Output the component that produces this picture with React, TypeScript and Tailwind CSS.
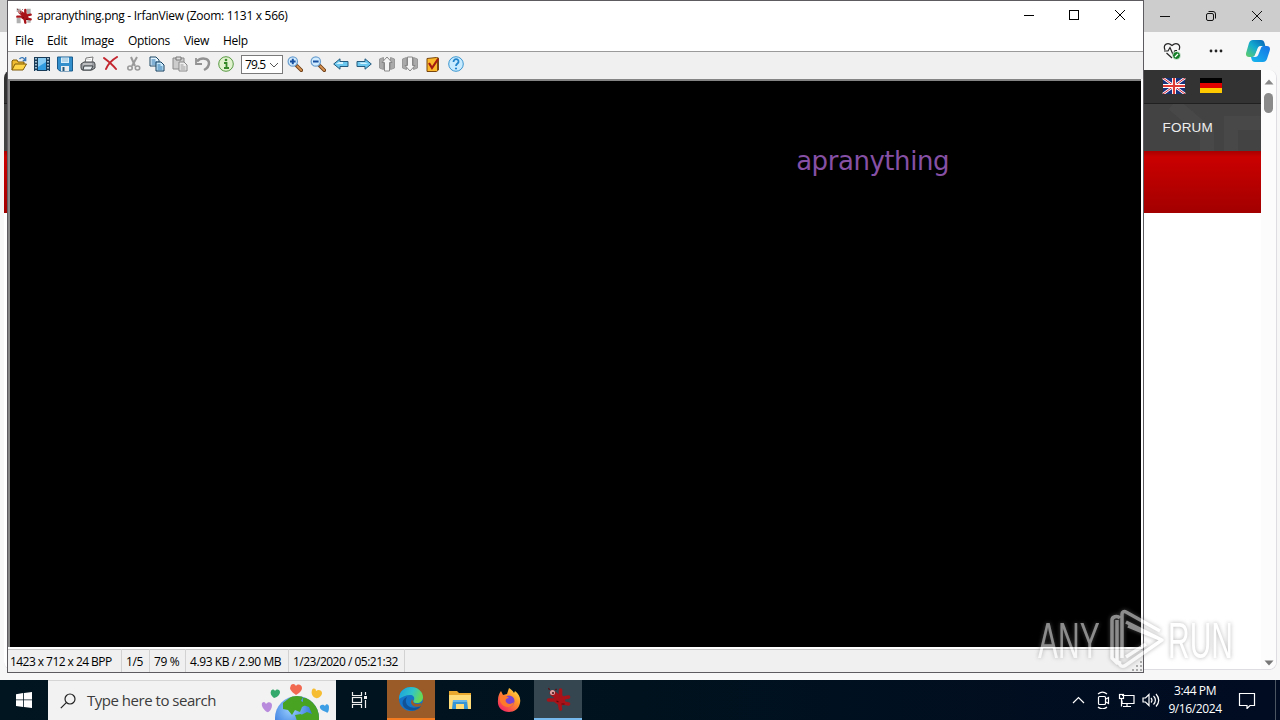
import type { ReactNode } from 'react'

const MENU = [
  { label: 'File', cls: 'w-8 tracking-[-0.1px]' },
  { label: 'Edit', cls: 'w-[34px] tracking-[-0.3px]' },
  { label: 'Image', cls: 'w-[47px] tracking-[-0.3px]' },
  { label: 'Options', cls: 'w-14 tracking-[-0.35px]' },
  { label: 'View', cls: 'w-[39px] tracking-[-0.3px]' },
  { label: 'Help', cls: 'w-10 tracking-[-0.3px]' },
]

const STATUS = [
  { label: '1423 x 712 x 24 BPP', cls: 'w-[114px] pl-0.5 tracking-[-0.55px]' },
  { label: '1/5', cls: 'w-7 pl-1 tracking-[-0.4px]' },
  { label: '79 %', cls: 'w-9 pl-1 tracking-[-0.4px]' },
  { label: '4.93 KB / 2.90 MB', cls: 'w-[103px] pl-1 tracking-[-0.4px]' },
  { label: '1/23/2020 / 05:21:32', cls: 'w-[116px] pl-1 tracking-[-0.5px]' },
]

function Icon({ children }: { children: ReactNode }) {
  return (
    <svg viewBox="0 0 16 16" className="w-4 h-4 shrink-0" fill="none">
      {children}
    </svg>
  )
}

function Splat({ className, grey }: { className: string; grey?: boolean }) {
  return (
    <svg viewBox="0 0 24 24" className={className}>
      {grey && <path d="M1 1h6v5H1zM16 1h6v8h-6zM1 15h6v8H1zM17 16h5v6h-5z" fill="#b0b0b0" />}
      <g stroke="#a81319" strokeLinecap="round" strokeLinejoin="round" fill="#a81319">
        <path d="M9 9l5-1 3 3 1 5-4 2-5-3z" strokeWidth="2" />
        <path d="M14 9V3M17 11l5-1M17 16l5 1M13 16l1 6" strokeWidth="3.600" />
        <path d="M9 13H2" strokeWidth="3.600" />
        <path d="M10 9L6 6" strokeWidth="5.500" />
      </g>
      <circle cx="6" cy="5.500" r="2.500" fill="#dca5a5" />
      <circle cx="6.500" cy="6" r="1.100" fill="#541015" />
      <path d="M3 3L2 1M9 3l1-1M15 17l3 0M10 14l2 1" stroke="#5e080d" strokeWidth="1.200" />
    </svg>
  )
}

function Lens({ plus }: { plus?: boolean }) {
  return (
    <Icon>
      <path d="M9.500 9.500l4.800 4.800" stroke="#704019" strokeWidth="3.600" strokeLinecap="round" />
      <path d="M10.300 10.200l3.900 3.900" stroke="#d99452" strokeWidth="1.800" strokeLinecap="round" />
      <circle cx="5.800" cy="5.500" r="4.700" fill="#d2ecff" stroke="#6c9fcf" strokeWidth="1.200" />
      <path d={plus ? 'M3 5.500h5.600M5.800 2.700v5.600' : 'M3 5.500h5.600'} stroke="#174fa0" strokeWidth="2" />
    </Icon>
  )
}

function ToolbarLeft() {
  return (
    <>
      <Icon>
        <path d="M1 14V5l1-1h4l1 2h6v3" fill="#f0bd32" stroke="#805b08" />
        <path d="M1 14L4 8h11.500L12 14z" fill="#ffd647" stroke="#805b08" />
        <path d="M8.500 3c2-2.500 4.500-1.500 5.500 1M14.700 1v3.500h-3" stroke="#3978b6" strokeWidth="1.300" />
      </Icon>
      <Icon>
        <rect x="0" y="1" width="16" height="14" fill="#183c58" />
        <rect x="4" y="2" width="8" height="12" fill="#8acdf4" />
        <path d="M4 11l8-5v8H4z" fill="#329ee1" />
        <path d="M2 2v13M14 2v13" stroke="#d8ecf7" strokeWidth="1.500" strokeDasharray="1.500 1.500" />
      </Icon>
      <Icon>
        <path d="M.5 1h15v14H3l-2.500-2z" fill="#338fcc" stroke="#1b5c8c" />
        <path d="M4 1.500h8V7H4z" fill="#d9f0fc" />
        <path d="M5 3h6M5 5h6" stroke="#91b9d3" />
        <path d="M4 10h8v5H4z" fill="#e9edf0" />
        <path d="M5.500 11h2v4h-2z" fill="#21577b" />
      </Icon>
      <Icon>
        <path d="M5 7l1-5 7-1-1 6" fill="#fff" stroke="#777" />
        <path d="M1 8l3-2h10l1 2v4l-3 2H2l-1-2z" fill="#9b9fa4" stroke="#45484b" />
        <path d="M4 10h9l-2 4H3z" fill="#e8edf1" stroke="#3d4247" />
        <path d="M3 8h9M6 3.500h5" stroke="#ddd" />
      </Icon>
      <Icon>
        <path d="M1 2c4 3 8 6 12 11M14 1C9 4 5 8 3 13" stroke="#c4262f" strokeWidth="2" strokeLinecap="round" />
      </Icon>
      <Icon>
        <path d="M5 1l4 9M11 1L6 10" stroke="#999" strokeWidth="2" />
        <ellipse cx="4" cy="12" rx="2.200" ry="2" stroke="#999" strokeWidth="1.600" />
        <ellipse cx="11.500" cy="12" rx="2.200" ry="2" stroke="#999" strokeWidth="1.600" />
      </Icon>
      <Icon>
        <path d="M1 1h6l3 3v6H1z" fill="#e5f5ff" stroke="#1c4765" />
        <path d="M2.500 4h4M2.500 6h6M2.500 8h6" stroke="#236eab" />
        <path d="M7 6h5l3 3v6H7z" fill="#c7e9fb" stroke="#123f61" />
        <path d="M8.500 9h3M8.500 11h5M8.500 13h5" stroke="#236eab" />
      </Icon>
      <Icon>
        <path d="M1 2h11v11H1z" fill="#ccc" stroke="#888" />
        <path d="M4 1h5v3H4z" fill="#ddd" stroke="#777" />
        <path d="M7 6h5l3 3v6H7z" fill="#eee" stroke="#888" />
        <path d="M8.500 9h3M8.500 11h5M8.500 13h5" stroke="#999" />
      </Icon>
      <Icon>
        <path d="M2 5.500C6 1 14 2 14 7c0 4-3 6-5 7" stroke="#929292" strokeWidth="2.500" />
        <path d="M1 2v6h6" stroke="#929292" strokeWidth="1.800" />
      </Icon>
      <Icon>
        <circle cx="8" cy="8" r="7.300" fill="#e0f2ce" stroke="#589a43" />
        <circle cx="8" cy="4" r="1.300" fill="#368927" />
        <path d="M6 7h2.500v5M6 12h5" stroke="#368927" strokeWidth="1.800" />
      </Icon>
    </>
  )
}

function ToolbarRight() {
  return (
    <>
      <Lens plus />
      <Lens />
      <Icon>
        <path d="M.7 8L7 2.800v2.700h8v5H7v2.700z" fill="#6dc8ef" stroke="#245a7d" />
        <path d="M3 8l3-2h4v2z" fill="#d6f3ff" />
      </Icon>
      <Icon>
        <path d="M15.300 8L9 2.800v2.700H1v5h8v2.700z" fill="#6dc8ef" stroke="#245a7d" />
        <path d="M3 6.500h6l3 1.500H5z" fill="#d6f3ff" />
      </Icon>
      <Icon>
        <path d="M.5 3l4-1.500v12L.5 12zM15.500 3l-4-1.500v12l4-1.500z" fill="#aaa" stroke="#999" />
        <path d="M8 1l5 5.500h-2.500V15h-5V6.500H3z" fill="#f5f5f5" stroke="#888" />
      </Icon>
      <Icon>
        <path d="M.5 3l4-1.500v12L.5 12zM15.500 3l-4-1.500v12l4-1.500z" fill="#aaa" stroke="#999" />
        <path d="M8 15l5-5.500h-2.500V1h-5v8.500H3z" fill="#f5f5f5" stroke="#888" />
      </Icon>
      <Icon>
        <path d="M2 2.500l9.500-1 2 .5v12l-2 1.500H2z" fill="#fbb82a" stroke="#79460d" />
        <path d="M12 2.500v12l1.500-1V2z" fill="#7f4814" />
        <path d="M4 7l3 5 6-9" stroke="#a51b12" strokeWidth="2.200" />
      </Icon>
      <Icon>
        <circle cx="8" cy="8" r="7.300" fill="#c9ebff" stroke="#3b96cf" />
        <path d="M5.500 6c0-4 5.500-3.500 5 0-.2 1.500-2.500 1.700-2.500 4" stroke="#2386cc" strokeWidth="1.800" />
        <circle cx="8" cy="12.500" r="1.100" fill="#2386cc" />
      </Icon>
    </>
  )
}

function BrowserWindow() {
  return (
    <div className="absolute inset-x-0 top-0 h-[680px] bg-[#f7f7f8] flex flex-col">
      <div className="h-8 shrink-0 bg-[#cdcdcd] flex justify-end items-center">
        <svg viewBox="0 0 124 16" className="w-[124px] h-4 mr-[3px]" fill="none" stroke="#111">
          <path d="M7 8.500h10M99 3l10 10M109 3L99 13" />
          <rect x="53.500" y="5.500" width="7" height="7" rx="1.500" />
          <path d="M55.500 3.500h4.500a2.500 2.500 0 0 1 2.500 2.500v4.500" />
        </svg>
      </div>
      <div className="h-[38px] shrink-0 flex justify-end items-center pr-[9px] gap-[26px]">
        <svg viewBox="0 0 18 18" className="w-[18px] h-[18px] mr-px" fill="none" stroke="#252525" strokeWidth="1.200">
          <path d="M2 8C-.5 2 5-.2 9 3.500 13-.2 18.500 2 16 8M1 9h4l2-3.500 3 7 2-4h2M3.500 11L9 16" />
          <circle cx="13.500" cy="13.500" r="4" fill="#16802a" stroke="#f7f7f7" strokeWidth=".8" />
          <path d="M12 15l3-3" stroke="#fff" />
        </svg>
        <svg viewBox="0 0 16 4" className="w-4 h-1" fill="#222">
          <circle cx="3" cy="2" r="1.400" />
          <circle cx="8" cy="2" r="1.400" />
          <circle cx="13" cy="2" r="1.400" />
        </svg>
        <svg viewBox="0 0 26 24" className="w-[26px] h-6 -ml-[5px]">
          <defs>
            <linearGradient id="cpa" x1="0" y1="1" x2="1" y2="0">
              <stop stopColor="#64cf65" />
              <stop offset=".5" stopColor="#13acd0" />
              <stop offset="1" stopColor="#075fb6" />
            </linearGradient>
            <linearGradient id="cpb" x1="0" y1="1" x2="1" y2="0">
              <stop stopColor="#16b9ed" />
              <stop offset="1" stopColor="#1671e6" />
            </linearGradient>
          </defs>
          <path d="M8 1h8c2 0 3 1 3.500 3l.8 3h-4c-2 0-3 1-3.600 3l-2 5c-.6 2-1.500 3-4 3H4c-3 0-3.500-3-2.600-5L4 4c.8-2 2-3 4-3z" fill="url(#cpa)" />
          <path d="M18 23h-8c-2 0-3-1-3.500-3L6 18c3 0 4.500-1 5.200-3l2-5c.6-2 1.500-3 4-3H22c3 0 3.500 3 2.600 5L22 20c-.8 2-2 3-4 3z" fill="url(#cpb)" />
          <path d="M16 7c-2 0-3 1-3.600 3l-2 5c-.5 1.700-1.200 2.500-2.400 3h2c2 0 3-1 3.600-3l2-5c.5-1.700 1-2.500 2.400-3z" fill="#f7f7f8" />
        </svg>
      </div>
      <div className="h-[600px] ml-1 mr-[3px] shrink-0 flex rounded-lg overflow-hidden bg-white border-b border-r border-[#dedee2]">
        <div className="flex-1">
          <div className="h-[34px] bg-[#333] border-b border-[#202020] flex justify-end items-start gap-[14px] pt-2 pr-[39px]">
            <svg viewBox="0 0 24 16" className="w-6 h-4">
              <path d="M1 0h22v16H1z" fill="#18317b" />
              <path d="M1 0l22 16M23 0L1 16" stroke="#fff" strokeWidth="2.600" />
              <path d="M1 0l22 16M23 0L1 16" stroke="#d61e31" strokeWidth="1" />
              <path d="M12 0v16M1 8h22" stroke="#fff" strokeWidth="4" />
              <path d="M12 0v16M1 8h22" stroke="#dd3a35" strokeWidth="2.200" />
            </svg>
            <div className="w-[22px] h-[15px] flex flex-col">
              <div className="flex-1 bg-black" />
              <div className="flex-1 bg-[#df0000]" />
              <div className="flex-1 bg-[#ffc900]" />
            </div>
          </div>
          <div className="h-[47px] bg-[#434343] relative flex justify-end items-center pr-12 overflow-hidden">
            <svg viewBox="0 0 118 47" className="absolute right-0 top-0 w-[118px] h-[47px]" fill="none" stroke="#484848" strokeWidth="14">
              <path d="M30 0l34 29v18M88 47V19h30" />
            </svg>
            <span className="relative text-[#eee] text-[13.5px] leading-[18px] font-['Liberation_Sans',sans-serif] tracking-[0.2px]">FORUM</span>
          </div>
          <div className="h-[62px] bg-linear-to-b from-[#a90000] via-[#ca0000] via-10% to-[#a30000]" />
        </div>
        <div className="w-[15px] bg-[#fcfcfc] flex flex-col items-center pt-[9px] pb-[3px]">
          <svg viewBox="0 0 10 6" className="w-2.5 h-1.5" fill="#888"><path d="M5 .5L9.500 5.500H.5z" /></svg>
          <div className="mt-2 w-[9px] h-5 rounded-full bg-[#8a8a8a]" />
          <svg viewBox="0 0 10 6" className="w-2.5 h-1.5 mt-auto" fill="#777"><path d="M5 5.500L9.500.5H.5z" /></svg>
        </div>
      </div>
    </div>
  )
}

function ViewerWindow() {
  return (
    <div className="absolute left-[7px] top-0 w-[1137px] h-[673px] border border-[#5d5b60] bg-white flex flex-col text-xs text-black">
      <div className="h-[30px] shrink-0 flex items-center pl-2">
        <Splat grey className="w-4 h-[18px]" />
        <span className="ml-[5px] whitespace-nowrap tracking-[-0.29px]">apranything.png - IrfanView (Zoom: 1131 x 566)</span>
        <svg viewBox="0 0 104 12" className="w-[104px] h-3 ml-auto mr-[16px] -mt-0.5" fill="none" stroke="#000">
          <path d="M1 6.500h10M92 1l10 10M102 1L92 11" />
          <rect x="46.500" y="1.500" width="9" height="9" />
        </svg>
      </div>
      <div className="h-5 shrink-0 flex items-center pl-[7px]">
        {MENU.map((m) => (
          <span key={m.label} className={`${m.cls} whitespace-nowrap`}>{m.label}</span>
        ))}
      </div>
      <div className="h-7 shrink-0 border-t border-[#9a9a9a] bg-[#f0f0f0] flex items-center gap-[7px] pl-[3px] pb-[3px]">
        <ToolbarLeft />
        <div className="w-[42px] h-[19px] border border-[#7a7a7a] bg-white flex items-center pl-[3px]">
          <span className="w-[21px] pt-0.5 whitespace-nowrap tracking-[-0.9px]">79.5</span>
          <svg viewBox="0 0 10 6" className="w-2.5 h-1.5 ml-[3px] mt-0.5 shrink-0" fill="none" stroke="#555"><path d="M1 1l4 4 4-4" /></svg>
        </div>
        <div className="flex gap-[7px] -ml-[3px]">
          <ToolbarRight />
        </div>
      </div>
      <div className="flex-1 bg-black border-t-2 border-l-2 border-[#858585] mr-[2px] flex justify-end pt-[62px] pr-[192px]">
        <span className="font-['DejaVu_Sans',sans-serif] text-[26px] leading-9 text-[#8650a5] tracking-[-0.45px]">apranything</span>
      </div>
      <div className="h-[25px] shrink-0 border-t-2 border-white bg-[#f0f0f0] flex items-stretch shadow-[inset_0_1px_#c8c8c8]">
        {STATUS.map((s) => (
          <span key={s.label} className={`${s.cls} border-r border-[#d2d2d2] flex items-center pt-0.5 text-[12px] whitespace-nowrap`}>
            {s.label}
          </span>
        ))}
        <svg viewBox="0 0 12 12" className="w-3 h-3 ml-auto self-end" fill="#aaa">
          <path d="M9 1h2v2H9zM5 5h2v2H5zM9 5h2v2H9zM1 9h2v2H1zM5 9h2v2H5zM9 9h2v2H9z" />
        </svg>
      </div>
    </div>
  )
}

function Watermark() {
  return (
    <div className="absolute left-[1038px] top-[608px] w-[196px] h-16 flex opacity-55 drop-shadow-[0_0_2px_#777]">
      <div className="w-[68px] pt-3">
        <span className="block origin-left scale-x-[0.6] text-[50px] leading-[42px] font-['Liberation_Sans',sans-serif] text-white">ANY</span>
      </div>
      <svg viewBox="0 0 60 64" className="w-[60px] h-16 shrink-0" fill="none" stroke="#fff" strokeWidth="3.500" strokeLinejoin="round">
        <path d="M14 10c-3-3-8-1-8 2v38l5 5V12M16 50V6c0-2 2-3 4-2l34 19M22 18l34 14-36 25c-4 3-8 0-6-4M20 14l36 18M20 49l20-13" />
      </svg>
      <div className="pt-3 pl-0.5">
        <span className="block w-0 origin-left scale-x-[0.6] text-[50px] leading-[42px] font-['Liberation_Sans',sans-serif] text-white">RUN</span>
      </div>
    </div>
  )
}

function SearchArt() {
  return (
    <svg viewBox="0 0 70 40" className="w-[70px] h-10 ml-auto mr-[5px]">
      <defs>
        <radialGradient id="sea" cx=".35" cy=".3">
          <stop stopColor="#99cfff" />
          <stop offset="1" stopColor="#3578dd" />
        </radialGradient>
        <clipPath id="globe"><circle cx="36" cy="37" r="22" /></clipPath>
      </defs>
      <circle cx="36" cy="37" r="22" fill="url(#sea)" />
      <g clipPath="url(#globe)" fill="#48a323">
        <path d="M22 22l9-7 12-1-3 6 6 3-5 3-2 5-5-2-3 5-4-5-5-1zM42 17l7-1 10 13v11H43l-3-6 6-3 5 2-3-7-6-2z" />
        <path d="M34 34l6-1 6 7H36z" />
      </g>
      <path d="M30 4c2-2 4-1 5 1 2-3 6-1 6 2 0 4-6 7-6 7s-6-4-6-7z" fill="#f26951" />
      <path d="M10 10c1-2 3-2 4 0 2-3 5-1 5 1s-2 5-6 6c-3-2-4-5-3-7z" fill="#35a86b" />
      <path d="M51 9c1-2 4-2 4 1 2-2 6-1 6 2s-4 6-6 5c-4-1-5-5-4-8z" fill="#f7bd32" />
      <path d="M1 22c2-2 3-1 4 1 2-3 6-2 6 1 0 4-3 8-5 7-3-2-6-6-5-9z" fill="#b98bdc" />
      <path d="M59 25c2-2 4-1 5 0 1-3 4-2 4 1 0 4-1 7-3 5-3-1-7-3-6-6z" fill="#3d9ee5" />
    </svg>
  )
}

function TaskButton({ className, children }: { className: string; children: ReactNode }) {
  return <div className={`h-10 shrink-0 flex items-center justify-center ${className}`}>{children}</div>
}

function Taskbar() {
  return (
    <div className="absolute inset-x-0 bottom-0 h-10 bg-linear-to-r from-[#00151f] via-[#00121e] to-[#010b22] flex items-center">
      <TaskButton className="w-12">
        <svg viewBox="0 0 16 16" className="w-4 h-4" fill="#fff">
          <path d="M0 2.200L7.200 1v6.500H0zM8 .9L16 0v7.500H8zM0 8.300h7.200v6.600L0 14zM8 8.300h8V16l-8-1z" />
        </svg>
      </TaskButton>
      <div className="w-72 h-10 shrink-0 bg-[#f2f2f2] border-t border-[#d5d5d5] flex items-center pl-3 text-[#3c3c3c]">
        <svg viewBox="0 0 16 16" className="w-4 h-4" fill="none" stroke="#222" strokeWidth="1.200">
          <circle cx="10" cy="6" r="5" />
          <path d="M6.300 9.700L.8 15.200" />
        </svg>
        <span className="ml-[11px] text-[15px] whitespace-nowrap tracking-[-0.48px]">Type here to search</span>
        <SearchArt />
      </div>
      <TaskButton className="w-[51px] pr-[3px]">
        <svg viewBox="0 0 18 16" className="w-[18px] h-4" fill="none" stroke="#eee" strokeWidth="1.200">
          <path d="M1.500 0v3.500h9V0M1.500 16v-3.500h9V16M14.500 0v3M14.500 8v8" />
          <rect x="1.500" y="5.500" width="9" height="5" />
          <path d="M13 4h3v3h-3z" fill="#eee" stroke="none" />
        </svg>
      </TaskButton>
      <TaskButton className="w-12 bg-[#9b5b28] border-b-2 border-[#f47b20]">
        <svg viewBox="0 0 24 24" className="w-6 h-6">
          <defs>
            <linearGradient id="edge" x1="0" y1="0" x2="1" y2=".3">
              <stop stopColor="#179de0" />
              <stop offset=".6" stopColor="#32c5c7" />
              <stop offset="1" stopColor="#66d957" />
            </linearGradient>
          </defs>
          <circle cx="12" cy="12" r="12" fill="#1475c8" />
          <path d="M0 12C0 3 7 0 12 0c7 0 12 5 12 10 0 4-3 6-6 6-4 0-4-1.500-3-3 1-3-1-5-4-5-4 0-8 2-11 4z" fill="url(#edge)" />
          <path d="M8 10c-4 7 3 14 14 9-3 5-11 6-16 2-4-4-3-9 2-11z" fill="#115297" />
          <path d="M14 14c0 3 4 4 9 2l-1 3c-5 2-10 0-10-4l1-3z" fill="#9b5b28" />
        </svg>
      </TaskButton>
      <TaskButton className="w-[49px]">
        <svg viewBox="0 0 22 20" className="w-[22px] h-5">
          <path d="M0 1h8l2 2h12v16H0z" fill="#e8a92e" />
          <path d="M0 5h22v14H0z" fill="#ffdc77" />
          <path d="M4 10h14l1 9h-4v-5H7v5H3z" fill="#3595d5" />
          <path d="M4 10h14v2H4z" fill="#68b6e7" />
        </svg>
      </TaskButton>
      <TaskButton className="w-[50px] pr-px">
        <svg viewBox="0 0 24 24" className="w-6 h-6">
          <defs>
            <linearGradient id="fox" x1="1" y1="0" x2=".2" y2="1">
              <stop stopColor="#fff050" />
              <stop offset=".45" stopColor="#ff9428" />
              <stop offset="1" stopColor="#f32165" />
            </linearGradient>
          </defs>
          <path d="M4 3l2 4 4-1 2-6c2 1 4 3 5 5l1-2c4 3 6 7 5 12-1 6-6 9-11 9C5 24 0 19 1 12c0-4 1-6 3-9z" fill="url(#fox)" />
          <circle cx="12" cy="13" r="5.500" fill="#7943cf" />
          <path d="M3 8c4-2 7 0 9 2-3 0-4 2-3 4 2 3 6 2 8 0-1 5-6 6-10 4-3-2-5-5-4-10z" fill="#ff792b" />
        </svg>
      </TaskButton>
      <TaskButton className="w-12 bg-[#354650] border-b-2 border-[#76b9ed]">
        <Splat className="w-[25px] h-6" />
      </TaskButton>
      <div className="ml-auto h-10 flex items-center pr-1 text-white">
        <svg viewBox="0 0 88 18" className="w-[88px] h-[18px]" fill="none" stroke="#fff" strokeWidth="1.200">
          <path d="M1 12l5.500-5.500L12 12" />
          <rect x="26.500" y="5.500" width="7" height="8" rx="1" />
          <path d="M34 8l2.500-1.500v6L34 11M26 3c3-2.500 6-2.500 9 0M26 16c3 2.500 6 2.500 9 0" />
          <path d="M50 4.500h12v8H50v-3M55 12.500v3M51 15.500h8" />
          <rect x="47.500" y="3.500" width="4" height="4" />
          <path d="M49.500 7.500v8" />
          <path d="M71 7h2.500L77 3.500v11L73.500 11H71zM79 7c1.300 1.500 1.300 3 0 4.500M81.500 5c2.500 2.500 2.500 6 0 8.500M84 3c3.500 4 3.500 8.500 0 12.500" />
        </svg>
        <div className="w-[70px] flex flex-col items-center text-xs leading-[18px] tracking-[-0.4px]">
          <span>3:44 PM</span>
          <span>9/16/2024</span>
        </div>
        <svg viewBox="0 0 18 18" className="w-[18px] h-[18px] ml-2" fill="none" stroke="#fff" strokeWidth="1.200">
          <path d="M1.500 2.500h15v12H12l-3 3v-3H1.500z" />
        </svg>
        <div className="w-px h-10 bg-[#4b5562] ml-[19px]" />
      </div>
    </div>
  )
}

export default function App() {
  return (
    <div className="relative w-[1280px] h-[720px] overflow-hidden bg-white font-['Open_Sans','Noto_Sans',sans-serif]">
      <BrowserWindow />
      <ViewerWindow />
      <Taskbar />
      <Watermark />
    </div>
  )
}
